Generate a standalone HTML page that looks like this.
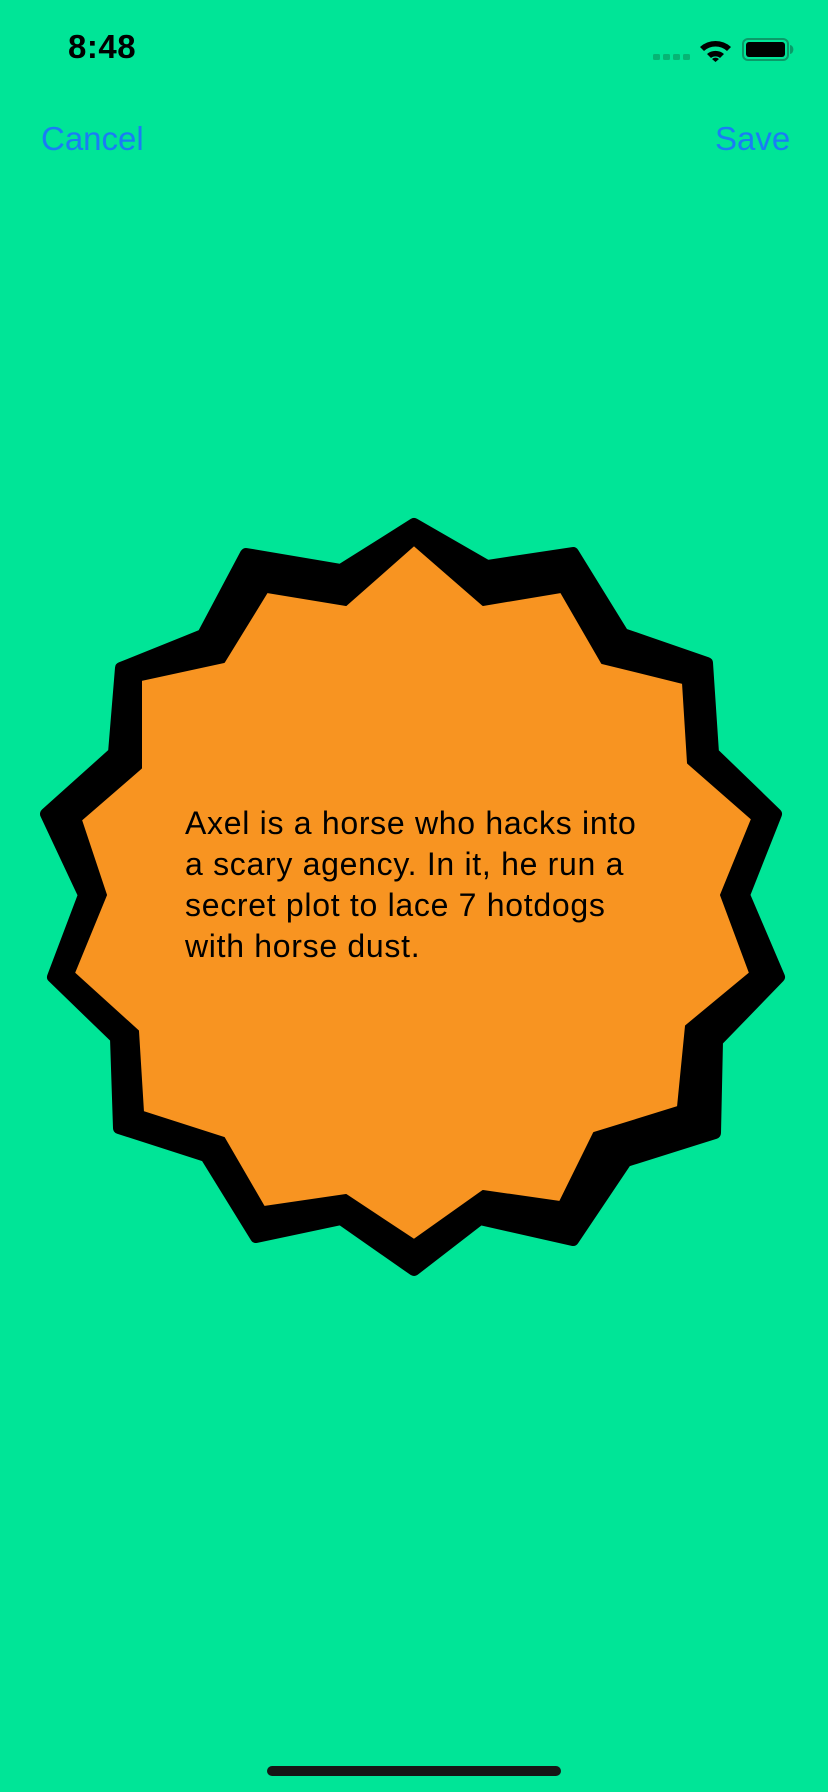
<!DOCTYPE html>
<html><head><meta charset="utf-8"><style>
html,body{margin:0;padding:0;}
body{width:828px;height:1792px;background:#00e597;position:relative;overflow:hidden;font-family:"Liberation Sans",sans-serif;}
.t{position:absolute;}
</style></head><body>
<div class="t" style="left:68px;top:28px;font-size:33px;font-weight:bold;color:#000;letter-spacing:0.5px;">8:48</div>
<svg class="t" style="left:640px;top:30px" width="160" height="40" viewBox="640 30 160 40">
<g fill="#05b574"><rect x="653" y="54" width="7" height="6" rx="1.5"/><rect x="663" y="54" width="7" height="6" rx="1.5"/><rect x="673" y="54" width="7" height="6" rx="1.5"/><rect x="683" y="54" width="7" height="6" rx="1.5"/></g>
<path d="M700,47 A23,23 0 0 1 731,47 L727,51 A17,17 0 0 0 704,51 Z M707,54 A13,13 0 0 1 724,54 L720,58 A7,7 0 0 0 711,58 Z M712,59 A5,5 0 0 1 719,59 L715.5,62 Z" fill="#000"/>
<rect x="743" y="39" width="45" height="21" rx="5" fill="none" stroke="#0a9a68" stroke-width="2"/>
<rect x="746" y="42" width="39" height="15" rx="3" fill="#000"/>
<path d="M790,45 a3,4 0 0 1 0,9 z" fill="#0a9a68"/>
</svg>
<div class="t" style="left:41px;top:120px;font-size:33px;color:#1a7cf5;">Cancel</div>
<div class="t" style="left:715px;top:120px;font-size:33px;color:#1a7cf5;">Save</div>
<svg class="t" style="left:0;top:0" width="828" height="1792">
<polygon fill="#000" stroke="#000" stroke-width="12" stroke-linejoin="round" points="414,524 487,566 573,553 623,634 707,663 713,753 776,814 744,895 779,977 717,1041 715,1133 626,1161 573,1240 480,1219 414,1270 341,1219 256,1237 206,1156 119,1128 116,1038 53,977 84,895 46,814 114,753 121,668 203,635 246,554 341,570"/>
<polygon fill="#f89421" stroke="#000" stroke-width="2" stroke-linejoin="round" points="414,545 483,605 561,592 602,663 683,683 688,763 752,819 721,895 750,973 686,1026 678,1107 594,1133 560,1202 483,1191 414,1240 346,1195 264,1207 224,1138 143,1112 138,1031 74,973 106,895 81,820 141,768 141,680 224,662 267,592 346,605"/>
</svg>
<div class="t" style="left:185px;top:803px;font-size:32px;letter-spacing:0.7px;line-height:41px;color:#000;white-space:nowrap;">Axel is a horse who hacks into<br>a scary agency. In it, he run a<br>secret plot to lace 7 hotdogs<br>with horse dust.</div>
<div class="t" style="left:267px;top:1766px;width:294px;height:10px;border-radius:5px;background:#151515;"></div>
</body></html>
